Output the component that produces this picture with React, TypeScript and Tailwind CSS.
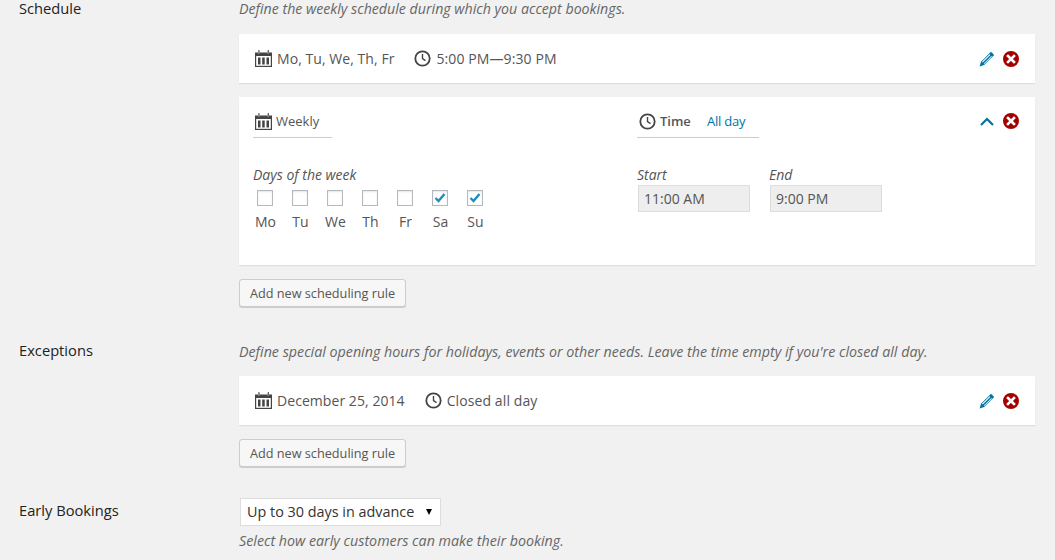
const CalendarIcon = () => (
  <svg width="17" height="17" viewBox="0 0 17 17" className="shrink-0">
    <path fill="#444" d="M0 2.5h3V1h1.5v1.5h8V1H14v1.5h3V17H0z" />
    <rect x="1.2" y="6" width="14.6" height="9.8" fill="#fff" />
    <rect x="3" y="7.5" width="2.5" height="7" fill="#444" />
    <rect x="7.2" y="7.5" width="2.5" height="7" fill="#444" />
    <rect x="11.5" y="7.5" width="2.5" height="7" fill="#444" />
    <rect x="3" y="0" width="1.5" height="3.5" fill="#fff" />
    <rect x="12.5" y="0" width="1.5" height="3.5" fill="#fff" />
    <rect x="3.4" y="0" width="1" height="3.5" fill="#444" />
    <rect x="12.8" y="0" width="1" height="3.5" fill="#444" />
  </svg>
);

const ClockIcon = () => (
  <svg width="17" height="17" viewBox="0 0 17 17" className="shrink-0">
    <circle cx="8.5" cy="8.5" r="7.2" fill="none" stroke="#444" strokeWidth="1.8" />
    <path d="M8.5 4v4.6l3 2" fill="none" stroke="#444" strokeWidth="1.4" />
  </svg>
);

const PencilIcon = () => (
  <svg width="16" height="16" viewBox="0 0 16 16" className="shrink-0">
    <path fill="#0074a2" d="M12 .8l3.2 3.2-10 10-4.6 1.4 1.4-4.6z" />
    <path fill="#fff" d="M3 10.8l7.6-7.6.7.7-7.6 7.6zM4.8 12.6l7.6-7.6.5.5-7.6 7.6z" />
  </svg>
);

const RemoveIcon = () => (
  <svg width="16" height="16" viewBox="0 0 16 16" className="shrink-0">
    <circle cx="8" cy="8" r="8" fill="#a50000" />
    <path d="M5 5l6 6M11 5l-6 6" stroke="#fff" strokeWidth="2.6" strokeLinecap="square" />
  </svg>
);

const ChevronUp = () => (
  <svg width="16" height="16" viewBox="0 0 16 16" className="shrink-0">
    <path d="M2 12l6-6 6 6" fill="none" stroke="#0074a2" strokeWidth="2.2" />
  </svg>
);

const days = [
  { label: 'Mo', checked: false },
  { label: 'Tu', checked: false },
  { label: 'We', checked: false },
  { label: 'Th', checked: false },
  { label: 'Fr', checked: false },
  { label: 'Sa', checked: true },
  { label: 'Su', checked: true },
];

function DayBox({ label, checked }: { label: string; checked: boolean }) {
  return (
    <div className="flex w-[35px] flex-col items-center">
      <div className="flex h-4 w-4 items-center justify-center border border-[#b4b9be] bg-white shadow-[inset_0_1px_2px_rgba(0,0,0,0.1)]">
        {checked && (
          <svg width="12" height="12" viewBox="0 0 12 12">
            <path d="M1.5 6l3 3 6-7" fill="none" stroke="#1e8cbe" strokeWidth="2.4" />
          </svg>
        )}
      </div>
      <span className="mt-[6px] pl-[2px] text-[14px] leading-[20px] text-[#555]">{label}</span>
    </div>
  );
}

function AddButton() {
  return (
    <button className="h-[28px] w-[167px] rounded-[3px] border border-[#cccccc] bg-[#f7f7f7] pt-px text-[12.7px] text-[#555] shadow-[0_1px_0_#cccccc]">
      Add new scheduling rule
    </button>
  );
}

function RuleCard({ date, time }: { date: string; time: string }) {
  return (
    <div className="flex h-[49px] items-center bg-white pl-4 pr-4 shadow-[0_1px_1px_rgba(0,0,0,0.08)]">
      <CalendarIcon />
      <span className="ml-[5px] text-[14px] tracking-[0.06px] text-[#555]">{date}</span>
      <span className="ml-[20px]">
        <ClockIcon />
      </span>
      <span className="ml-[5px] text-[14px] tracking-[0.1px] text-[#555]">{time}</span>
      <div className="ml-auto flex items-center gap-2">
        <PencilIcon />
        <RemoveIcon />
      </div>
    </div>
  );
}

export default function App() {
  return (
    <div className="h-[560px] w-[1055px] overflow-hidden bg-[#f1f1f1] font-['Open_Sans',sans-serif] text-[#444]">
      {/* Schedule */}
      <div className="flex pl-[19px]">
        <div className="w-[220px] text-[14.7px] font-medium leading-[16px] text-[#222]">Schedule</div>
        <div className="w-[796px]">
          <p className="text-[14.2px] italic leading-[18px] text-[#666]">
            Define the weekly schedule during which you accept bookings.
          </p>
          <div className="mt-4">
            <RuleCard date="Mo, Tu, We, Th, Fr" time="5:00 PM—9:30 PM" />
          </div>

          <div className="mt-[14px] flex h-[168px] bg-white pl-[14px] pr-4 shadow-[0_1px_1px_rgba(0,0,0,0.08)]">
            <div className="w-[384px] shrink-0">
              <div className="flex h-[41px] w-[79px] items-end gap-1 border-b border-[#ccc] pb-[7px] pl-[2px]">
                <CalendarIcon />
                <span className="text-[13px] leading-[18px] text-[#555]">Weekly</span>
              </div>
              <p className="mt-[27px] text-[14px] italic leading-[20px] text-[#555]">Days of the week</p>
              <div className="-ml-[6px] mt-[5px] flex">
                {days.map((d) => (
                  <DayBox key={d.label} label={d.label} checked={d.checked} />
                ))}
              </div>
            </div>

            <div className="w-[300px] shrink-0">
              <div className="flex h-[41px] w-[122px] items-end border-b border-[#ccc] pb-[7px] pl-[2px]">
                <ClockIcon />
                <span className="ml-[4px] text-[13px] font-semibold leading-[18px] text-[#555]">Time</span>
                <span className="ml-[16px] text-[13px] leading-[18px] tracking-[-0.2px] text-[#0074a2]">All day</span>
              </div>
              <div className="mt-[27px] flex gap-[19px]">
                <div>
                  <p className="text-[14px] italic leading-[20px] text-[#555]">Start</p>
                  <div className="ml-px flex h-[27px] w-[112px] items-center border border-[#dddddd] bg-[#eeeeee] pl-[5px] text-[14px] text-[#555]">
                    11:00 AM
                  </div>
                </div>
                <div>
                  <p className="text-[14px] italic leading-[20px] text-[#555]">End</p>
                  <div className="ml-px flex h-[27px] w-[112px] items-center border border-[#dddddd] bg-[#eeeeee] pl-[5px] text-[14px] text-[#555]">
                    9:00 PM
                  </div>
                </div>
              </div>
            </div>

            <div className="ml-auto flex h-[48px] items-center gap-2">
              <ChevronUp />
              <RemoveIcon />
            </div>
          </div>

          <div className="mt-[14px]">
            <AddButton />
          </div>
        </div>
      </div>

      {/* Exceptions */}
      <div className="mt-[35px] flex pl-[19px]">
        <div className="w-[220px] text-[14.7px] font-medium leading-[16px] text-[#222]">Exceptions</div>
        <div className="w-[796px]">
          <p className="pt-px text-[14.25px] italic leading-[18px] text-[#666]">
            Define special opening hours for holidays, events or other needs. Leave the time empty if you're closed all day.
          </p>
          <div className="mt-[15px]">
            <RuleCard date="December 25, 2014" time="Closed all day" />
          </div>
          <div className="mt-[14px]">
            <AddButton />
          </div>
        </div>
      </div>

      {/* Early Bookings */}
      <div className="mt-[31px] flex pl-[19px]">
        <div className="w-[220px] pt-[4px] text-[14.7px] font-medium leading-[16px] text-[#222]">Early Bookings</div>
        <div className="w-[796px]">
          <div className="ml-px flex h-[28px] w-[201px] items-center justify-between border border-[#dddddd] bg-white pb-px pl-[6px] pr-2 text-[14.4px] text-[#333]">
            Up to 30 days in advance
            <span className="h-0 w-0 border-x-[3.5px] border-t-[6px] border-x-transparent border-t-black" />
          </div>
          <p className="mt-[6px] text-[14.25px] italic leading-[18px] text-[#666]">
            Select how early customers can make their booking.
          </p>
        </div>
      </div>
    </div>
  );
}
